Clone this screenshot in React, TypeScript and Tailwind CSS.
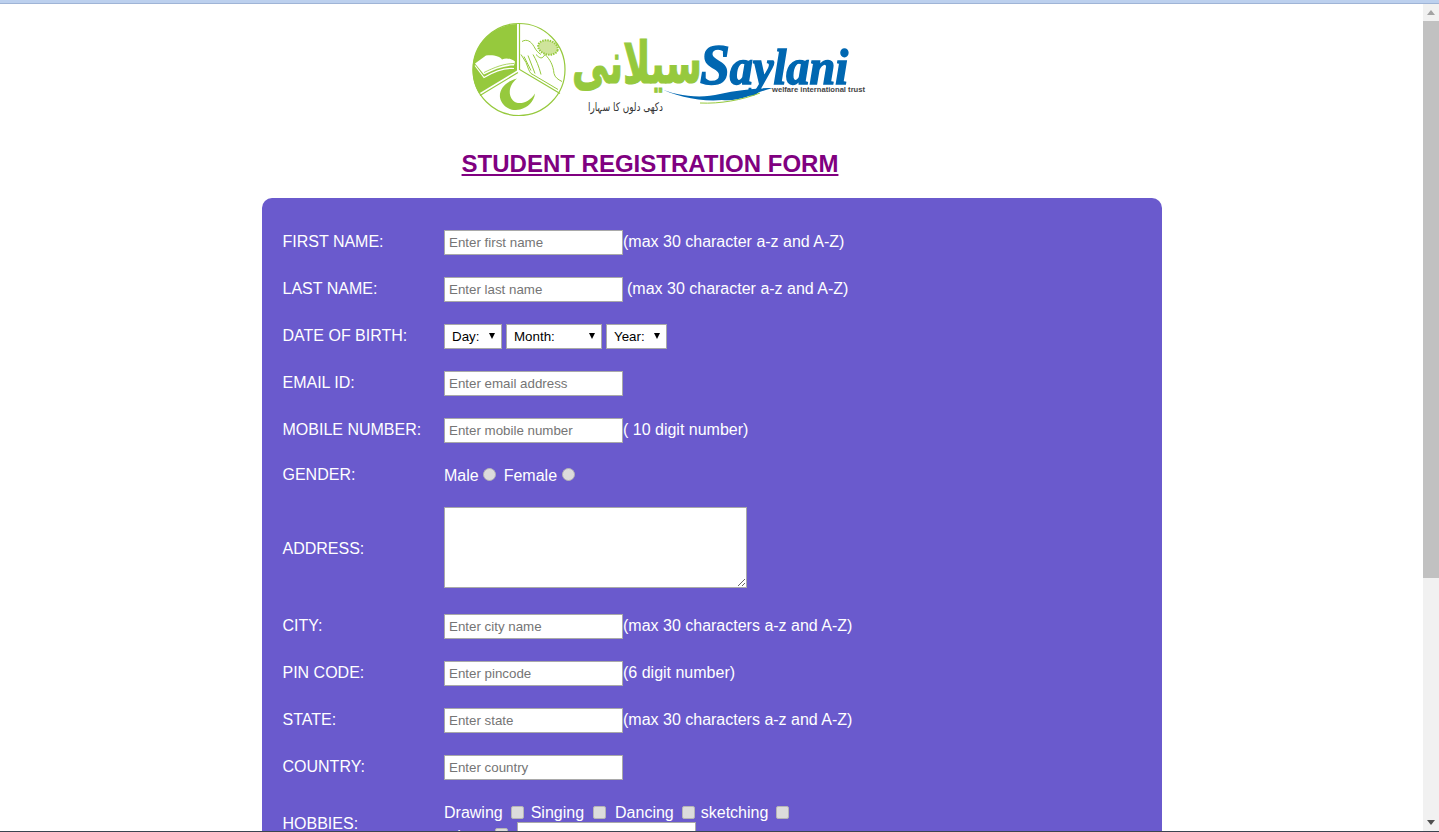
import React from "react";

const labelClass = "w-[161.5px] shrink-0 -translate-y-px text-white";
const inputClass =
  "h-[25px] w-[179px] border border-[#a9a9a9] bg-white pl-[4px] text-[13.33px] text-black outline-none placeholder:text-[#757575]";
const checkClass =
  "h-[13px] w-[13px] appearance-none rounded-[2px] border border-[#b5b5b5] bg-[#dcdcdc]";
const radioClass =
  "h-[13px] w-[13px] -translate-y-px appearance-none rounded-full border border-[#b5b5b5] bg-[#dcdcdc]";

interface TextRow {
  label: string;
  placeholder: string;
  hint?: string;
  hintGap?: boolean;
}

function Logo() {
  const green = "#96c93d";
  const blue = "#0067b1";
  return (
    <svg width="400" height="100" viewBox="0 0 400 100" className="block">
      {/* emblem */}
      <g transform="translate(0 1.5)">
        <circle cx="49" cy="48" r="46" fill="white" stroke={green} strokeWidth="1.2" />
        <path d="M47 2.5 A46 46 0 0 0 9 72 L47 49 Z" fill={green} />
        <path d="M49.5 2.5 V48 L90 72 M48 51 L10 74" fill="none" stroke={green} strokeWidth="1.2" />
        {/* book */}
        <path d="M5 42 L16 34 C24 33 30 35 32 38 C36 36 41 37 45 40 L44 44 C34 44 24 48 14 53 Z" fill="white" />
        <path d="M5 44 L14 56 C24 50 34 46 44 47" fill="none" stroke="white" strokeWidth="1.2" />
        <path d="M14 51 C24 46 34 42 44 42" fill="none" stroke={green} strokeWidth="0.8" />
        {/* hands and grain */}
        <path
          d="M52 20 C57 17 61 20 64 25 C66 29 68 31 71 33 M51 33 L56 41 C58 46 59 50 61 52 L78 62 L88 68 M54 35 L61 49 M58 34 L65 52 M63 33 C66 38 69 45 71 53 M66 33 C70 37 72 38 75 33 C80 38 83 43 84 52 C85 56 88 58 92 60"
          fill="none"
          stroke={green}
          strokeWidth="1"
        />
        <ellipse cx="78" cy="26" rx="10" ry="7" fill="#cfe49b" stroke={green} strokeWidth="2" strokeDasharray="1.5 1" transform="rotate(15 78 26)" />
        {/* crescent */}
        <path d="M47 57 C35 60 29 68 30 76 C32 86 42 90 50 88 C58 86 64 80 65 72 C60 80 52 83 46 81 C38 77 37 65 47 57 Z" fill={green} />
      </g>
      {/* urdu name */}
      <text x="232" y="63" fontFamily="DejaVu Sans, sans-serif" fontWeight="700" fontSize="58" fill={green} stroke={green} strokeWidth="1.2" textLength="130" lengthAdjust="spacingAndGlyphs" direction="rtl">
        سیلانی
      </text>
      {/* latin name */}
      <text x="230" y="64" fontFamily="Liberation Serif, serif" fontWeight="700" fontStyle="italic" fontSize="50" fill={blue} stroke={blue} strokeWidth="1.6" textLength="148" lengthAdjust="spacingAndGlyphs">
        <tspan fontSize="58">S</tspan>aylani
      </text>
      <path d="M187 67 C205 76 230 79 250 74 C268 70 285 68 303 68 C285 72 272 82 252 80 C230 82 205 76 187 67 Z" fill={blue} />
      <path d="M230 83 C250 84 272 80 290 73" fill="none" stroke={green} strokeWidth="1" />
      <text x="302" y="72" fontFamily="Liberation Sans, sans-serif" fontWeight="700" fontSize="7.5" fill="#444" textLength="93" lengthAdjust="spacingAndGlyphs">
        welfare international trust
      </text>
      <text x="193" y="91" fontFamily="DejaVu Sans, sans-serif" fontSize="12" fill="#333" textLength="75" lengthAdjust="spacingAndGlyphs" direction="rtl">
        دکھی دلوں کا سہارا
      </text>
    </svg>
  );
}

function Field({ label, placeholder, hint, hintGap }: TextRow) {
  return (
    <div className="mt-[22px] flex h-[25px] items-center first:mt-0">
      <span className={labelClass}>{label}</span>
      <input type="text" placeholder={placeholder} className={inputClass} />
      {hint && <span className={hintGap ? "ml-[4px] -translate-y-px text-white" : "-translate-y-px text-white"}>{hint}</span>}
    </div>
  );
}

function DateSelect({ text, width }: { text: string; width: string }) {
  return (
    <div className={`relative h-[25px] ${width}`}>
      <select className="block h-full w-full appearance-none border border-[#a9a9a9] bg-white pl-[7px] text-[13.33px] text-black">
        <option>{text}</option>
      </select>
      <svg width="6" height="6" viewBox="0 0 6 6" className="pointer-events-none absolute right-[7px] top-[9px]">
        <path d="M0 0 H6 L3 6 Z" fill="#000" />
      </svg>
    </div>
  );
}

export default function App() {
  return (
    <div className="flex h-screen flex-col overflow-hidden bg-white font-['Liberation_Sans',Arial,sans-serif] text-[16px]">
      <div className="h-[4px] shrink-0 border-b border-[#9fb4d6] bg-[#bcd0ee]" />
      <div className="flex min-h-0 flex-1">
        <main className="min-w-0 flex-1 overflow-hidden">
          <div className="ml-[470px] mt-[16px] w-[400px]">
            <Logo />
          </div>
          <h1 className="mt-[27px] w-[1300px] text-center text-[24px] font-bold leading-[34px] text-[#800080] underline">
            STUDENT REGISTRATION FORM
          </h1>
          <form className="ml-[262px] mt-[17px] w-[900px] rounded-[10px] bg-[#6a5acd] pb-10 pl-[20.5px] pt-[32px]">
            <Field label="FIRST NAME:" placeholder="Enter first name" hint="(max 30 character a-z and A-Z)" />
            <Field label="LAST NAME:" placeholder="Enter last name" hint="(max 30 character a-z and A-Z)" hintGap />
            <div className="mt-[22px] flex h-[25px] items-center">
              <span className={labelClass}>DATE OF BIRTH:</span>
              <div className="flex gap-[4px]">
                <DateSelect text="Day:" width="w-[58px]" />
                <DateSelect text="Month:" width="w-[96px]" />
                <DateSelect text="Year:" width="w-[61px]" />
              </div>
            </div>
            <Field label="EMAIL ID:" placeholder="Enter email address" />
            <Field label="MOBILE NUMBER:" placeholder="Enter mobile number" hint="( 10 digit number)" />
            <div className="mt-[21px] flex h-[22px] items-center">
              <span className="w-[161.5px] shrink-0 text-white">GENDER:</span>
              <div className="flex items-center text-white">
                <span className="translate-y-px">Male</span>
                <input type="radio" name="gender" className={`ml-[4px] ${radioClass}`} />
                <span className="ml-[8px] translate-y-px">Female</span>
                <input type="radio" name="gender" className={`ml-[5px] ${radioClass}`} />
              </div>
            </div>
            <div className="mt-[21px] flex items-center">
              <span className="w-[161.5px] shrink-0 translate-y-px text-white">ADDRESS:</span>
              <textarea className="h-[81px] w-[303px] border border-[#a9a9a9] bg-white" />
            </div>
            <div className="mt-[26px]">
              <Field label="CITY:" placeholder="Enter city name" hint="(max 30 characters a-z and A-Z)" />
              <Field label="PIN CODE:" placeholder="Enter pincode" hint="(6 digit number)" />
              <Field label="STATE:" placeholder="Enter state" hint="(max 30 characters a-z and A-Z)" />
              <Field label="COUNTRY:" placeholder="Enter country" />
            </div>
            <div className="mt-[22px] flex items-center">
              <span className={labelClass}>HOBBIES:</span>
              <div className="text-white">
                <div className="flex h-[20px] items-center">
                  <span className="translate-y-px">Drawing</span>
                  <input type="checkbox" className={`ml-[8px] ${checkClass}`} />
                  <span className="ml-[7px] translate-y-px">Singing</span>
                  <input type="checkbox" className={`ml-[9px] ${checkClass}`} />
                  <span className="ml-[9px] translate-y-px">Dancing</span>
                  <input type="checkbox" className={`ml-[8px] ${checkClass}`} />
                  <span className="ml-[6px] translate-y-px">sketching</span>
                  <input type="checkbox" className={`ml-[8px] ${checkClass}`} />
                </div>
                <div className="flex h-[25px] items-center">
                  <span className="translate-y-[2px]">others</span>
                  <input type="checkbox" className={`ml-[7px] ${checkClass}`} />
                  <input type="text" className="ml-[9px] h-[25px] w-[179px] border border-[#a9a9a9] bg-white" />
                </div>
              </div>
            </div>
          </form>
        </main>
        {/* scrollbar */}
        <div className="flex w-[16px] shrink-0 flex-col bg-[#f1f1f1]">
          <div className="flex h-[17px] items-center justify-center">
            <svg width="8" height="5" viewBox="0 0 8 5">
              <path d="M4 0 L8 5 H0 Z" fill="#a3a3a3" />
            </svg>
          </div>
          <div className="h-[557px] bg-[#c1c1c1]" />
          <div className="flex-1" />
          <div className="flex h-[17px] items-center justify-center">
            <svg width="8" height="5" viewBox="0 0 8 5">
              <path d="M0 0 H8 L4 5 Z" fill="#505050" />
            </svg>
          </div>
        </div>
      </div>
      <div className="h-px shrink-0 bg-[#3a4450]" />
    </div>
  );
}
